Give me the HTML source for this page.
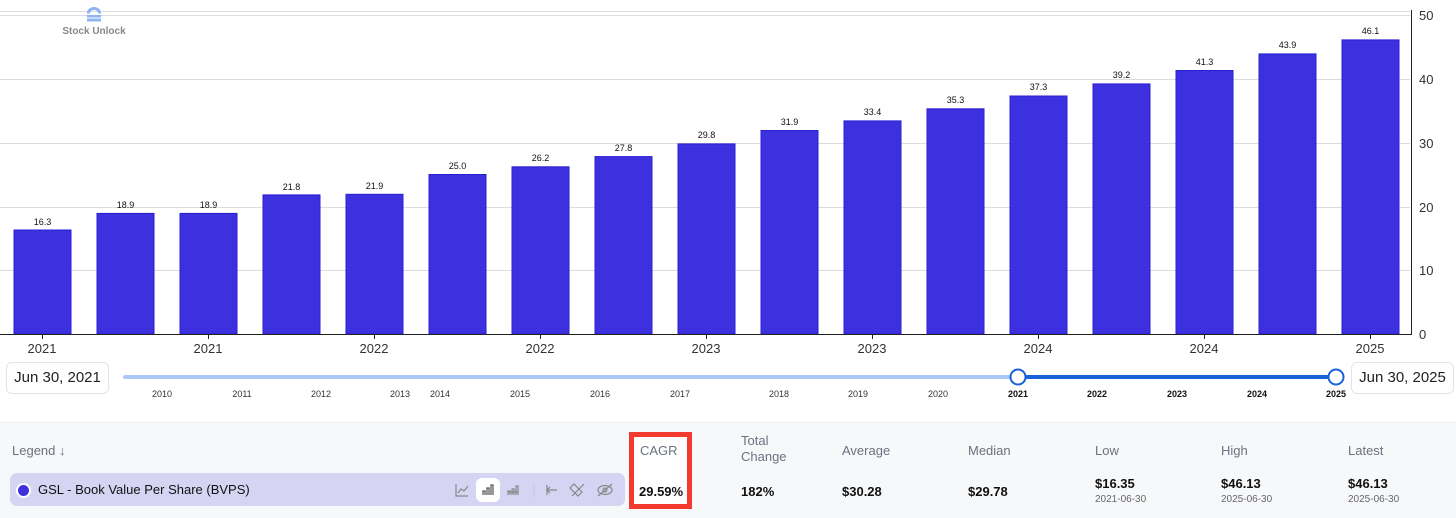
<!DOCTYPE html>
<html><head><meta charset="utf-8"><style>
body{margin:0;width:1456px;height:517px;overflow:hidden;background:#fff;font-family:"Liberation Sans",sans-serif;position:relative}
.abs{position:absolute}
.date{position:absolute;top:362px;height:30px;border:1px solid #e2e4e8;border-radius:6px;background:#fff;font-size:15px;color:#222;line-height:30px;text-align:center}
.hd{position:absolute;top:443px;font-size:13px;color:#6b7280;line-height:16px}
.val{position:absolute;font-size:13px;font-weight:bold;color:#111}
.sub{position:absolute;font-size:10px;color:#666}
</style></head><body>
<svg class="abs" style="left:0;top:0" width="1456" height="420" font-family="Liberation Sans, sans-serif">
<g stroke="#dcdcdc" stroke-width="1">
<line x1="0" y1="11.5" x2="1410" y2="11.5"/>
<line x1="0" y1="15.5" x2="1410" y2="15.5"/>
<line x1="0" y1="79.5" x2="1410" y2="79.5"/>
<line x1="0" y1="143.5" x2="1410" y2="143.5"/>
<line x1="0" y1="207.5" x2="1410" y2="207.5"/>
<line x1="0" y1="270.5" x2="1410" y2="270.5"/>
</g>
<g fill="#3d30df" stroke="#2a1fd0" stroke-width="1">
<rect x="14" y="230" width="57" height="104"/>
<rect x="97" y="213.4" width="57" height="120.6"/>
<rect x="180" y="213.4" width="57" height="120.6"/>
<rect x="263" y="194.9" width="57" height="139.1"/>
<rect x="346" y="194.3" width="57" height="139.7"/>
<rect x="429" y="174.5" width="57" height="159.5"/>
<rect x="512" y="166.8" width="57" height="167.2"/>
<rect x="595" y="156.6" width="57" height="177.4"/>
<rect x="678" y="143.9" width="57" height="190.1"/>
<rect x="761" y="130.5" width="57" height="203.5"/>
<rect x="844" y="120.9" width="57" height="213.1"/>
<rect x="927" y="108.8" width="57" height="225.2"/>
<rect x="1010" y="96" width="57" height="238"/>
<rect x="1093" y="83.9" width="57" height="250.1"/>
<rect x="1176" y="70.5" width="57" height="263.5"/>
<rect x="1259" y="53.9" width="57" height="280.1"/>
<rect x="1342" y="39.9" width="57" height="294.1"/>
</g>
<g font-size="9" fill="#111" text-anchor="middle">
<text x="42.5" y="225">16.3</text><text x="125.5" y="208">18.9</text><text x="208.5" y="208">18.9</text>
<text x="291.5" y="190">21.8</text><text x="374.5" y="189">21.9</text><text x="457.5" y="169">25.0</text>
<text x="540.5" y="161">26.2</text><text x="623.5" y="151">27.8</text><text x="706.5" y="138">29.8</text>
<text x="789.5" y="125">31.9</text><text x="872.5" y="115">33.4</text><text x="955.5" y="103">35.3</text>
<text x="1038.5" y="90">37.3</text><text x="1121.5" y="78">39.2</text><text x="1204.5" y="65">41.3</text>
<text x="1287.5" y="48">43.9</text><text x="1370.5" y="34">46.1</text>
</g>
<line x1="0" y1="334.5" x2="1412" y2="334.5" stroke="#222"/>
<line x1="1411.5" y1="10" x2="1411.5" y2="335" stroke="#222"/>
<g stroke="#222">
<line x1="42.5" y1="334" x2="42.5" y2="339"/><line x1="208.5" y1="334" x2="208.5" y2="339"/><line x1="374.5" y1="334" x2="374.5" y2="339"/><line x1="540.5" y1="334" x2="540.5" y2="339"/><line x1="706.5" y1="334" x2="706.5" y2="339"/><line x1="872.5" y1="334" x2="872.5" y2="339"/><line x1="1038.5" y1="334" x2="1038.5" y2="339"/><line x1="1204.5" y1="334" x2="1204.5" y2="339"/><line x1="1370.5" y1="334" x2="1370.5" y2="339"/>
</g>
<g font-size="13" fill="#333" text-anchor="middle">
<text x="42" y="353">2021</text><text x="208" y="353">2021</text><text x="374" y="353">2022</text><text x="540" y="353">2022</text><text x="706" y="353">2023</text><text x="872" y="353">2023</text><text x="1038" y="353">2024</text><text x="1204" y="353">2024</text><text x="1370" y="353">2025</text>
</g>
<g font-size="13" fill="#333">
<text x="1419" y="20">50</text><text x="1419" y="84">40</text><text x="1419" y="148">30</text><text x="1419" y="212">20</text><text x="1419" y="275">10</text><text x="1419" y="339">0</text>
</g>
<g fill="#8fb4f4"><path d="M87 13 a7 6 0 0 1 14 0 v0.5 h-3 v-0.5 a4 3 0 0 0 -8 0 v0.5 h-3z"/><rect x="87" y="15" width="14" height="2.5"/><rect x="87" y="18.5" width="14" height="3"/></g>
<text x="94" y="34" font-size="10" font-weight="bold" fill="#888" text-anchor="middle">Stock Unlock</text>
<rect x="123" y="375" width="895" height="4" rx="2" fill="#a9c8f5"/>
<rect x="1018" y="375" width="318" height="4" fill="#1a63d6"/>
<circle cx="1018" cy="377" r="7.5" fill="#fff" stroke="#1a63d6" stroke-width="2"/>
<circle cx="1336" cy="377" r="7.5" fill="#fff" stroke="#1a63d6" stroke-width="2"/>
<g font-size="9" fill="#333" text-anchor="middle">
<text x="162" y="397">2010</text><text x="242" y="397">2011</text><text x="321" y="397">2012</text><text x="400" y="397">2013</text><text x="440" y="397">2014</text><text x="520" y="397">2015</text><text x="600" y="397">2016</text><text x="680" y="397">2017</text><text x="779" y="397">2018</text><text x="858" y="397">2019</text><text x="938" y="397">2020</text>
</g>
<g font-size="9" fill="#111" font-weight="bold" text-anchor="middle">
<text x="1018" y="397">2021</text><text x="1097" y="397">2022</text><text x="1177" y="397">2023</text><text x="1257" y="397">2024</text><text x="1336" y="397">2025</text>
</g>
</svg>
<div class="date" style="left:6px;width:101px">Jun 30, 2021</div>
<div class="date" style="left:1351px;width:101px">Jun 30, 2025</div>
<div class="abs" style="left:0;top:422px;width:1456px;height:95px;background:#f7f8fa;border-top:1px solid #eceef1"></div>
<div class="abs" style="left:12px;top:443px;font-size:13px;color:#6b7280">Legend &#8595;</div>
<div class="abs" style="left:10px;top:473px;width:615px;height:33px;background:#d6d4f3;border-radius:7px"></div>
<div class="abs" style="left:16px;top:483px;width:11px;height:11px;border-radius:50%;background:#3d30df;border:2px solid #fff"></div>
<div class="abs" style="left:38px;top:482px;font-size:13px;color:#111">GSL - Book Value Per Share (BVPS)</div>
<div class="abs" style="left:476px;top:478px;width:24px;height:24px;background:#fff;border-radius:6px"></div>
<svg class="abs" style="left:450px;top:478px" width="175" height="24" fill="none" stroke="#888" stroke-width="1.2">
<path d="M6 6v12h12M8 15l3-4 3 2 4-5"/>
<path d="M33 17v-4h2v4M37 17v-7h2v7M41 17v-10h2v10" stroke="#555"/>
<path d="M58 17v-4h2v4M62 17v-6h2v6M66 17v-9h2v9M58 14h10"/>
<line x1="84" y1="5" x2="84" y2="19" stroke="#ccc"/>
<path d="M97 7v10M97 12h10M100 9l-3 3 3 3"/>
<path d="M124 6l8 8-4 4-8-8zM122 18l12-12"/>
<ellipse cx="155" cy="12" rx="7" ry="4.5"/><circle cx="155" cy="12" r="2"/><path d="M148 18l14-12"/>
</svg>
<div class="abs" style="left:629px;top:432px;width:53px;height:67px;border:5px solid #f23a2e;background:#fff"></div>
<div class="hd" style="left:640px">CAGR</div>
<div class="val" style="left:639px;top:484px">29.59%</div>
<div class="hd" style="left:741px;top:433px">Total<br>Change</div>
<div class="val" style="left:741px;top:484px">182%</div>
<div class="hd" style="left:842px">Average</div>
<div class="val" style="left:842px;top:484px">$30.28</div>
<div class="hd" style="left:968px">Median</div>
<div class="val" style="left:968px;top:484px">$29.78</div>
<div class="hd" style="left:1095px">Low</div>
<div class="val" style="left:1095px;top:476px">$16.35</div>
<div class="sub" style="left:1095px;top:494px">2021-06-30</div>
<div class="hd" style="left:1221px">High</div>
<div class="val" style="left:1221px;top:476px">$46.13</div>
<div class="sub" style="left:1221px;top:494px">2025-06-30</div>
<div class="hd" style="left:1348px">Latest</div>
<div class="val" style="left:1348px;top:476px">$46.13</div>
<div class="sub" style="left:1348px;top:494px">2025-06-30</div>
</body></html>
